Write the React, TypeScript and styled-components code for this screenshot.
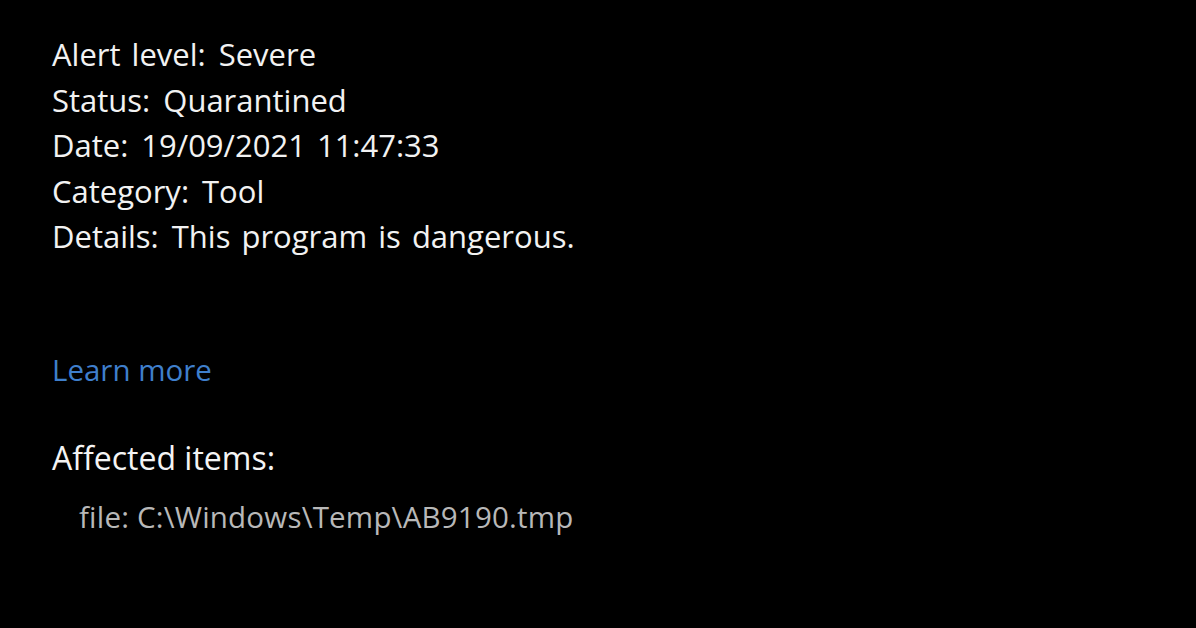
import * as React from 'react';
import styled, { createGlobalStyle } from 'styled-components';

const GlobalStyle = createGlobalStyle`
  html, body {
    margin: 0;
    padding: 0;
    background: #000;
  }
  body {
    font-family: "Open Sans", "Noto Sans", sans-serif;
  }
`;

const details = [
  { label: 'Alert level:', value: 'Severe' },
  { label: 'Status:', value: 'Quarantined' },
  { label: 'Date:', value: '19/09/2021 11:47:33' },
  { label: 'Category:', value: 'Tool' },
  { label: 'Details:', value: 'This program is dangerous.' },
];

function App() {
  return (
    <>
      <GlobalStyle />
      <Page>
        <DetailList>
          {details.map((d) => (
            <DetailRow key={d.label}>
              <span>{d.label}</span>
              <span>{d.value}</span>
            </DetailRow>
          ))}
        </DetailList>
        <LearnMore href="#">Learn more</LearnMore>
        <SectionTitle>Affected items:</SectionTitle>
        <Item>file: C:\Windows\Temp\AB9190.tmp</Item>
      </Page>
    </>
  );
}

const Page = styled.div`
  width: 1196px;
  height: 628px;
  box-sizing: border-box;
  padding: 32px 0 0 52px;
  background: #000;
  color: #f2f2f2;
  display: flex;
  flex-direction: column;
  align-items: flex-start;
`;

const DetailList = styled.div`
  display: flex;
  flex-direction: column;
`;

const DetailRow = styled.div`
  display: flex;
  gap: 13px;
  font-size: 31px;
  line-height: 45.5px;
  word-spacing: 3px;
`;

const LearnMore = styled.a`
  margin-top: 90px;
  font-size: 29.5px;
  line-height: 40px;
  color: #3f7fcc;
  text-decoration: none;
`;

const SectionTitle = styled.div`
  margin-top: 48px;
  font-size: 32px;
  line-height: 40px;
  color: #f4f4f4;
`;

const Item = styled.div`
  margin-top: 20px;
  margin-left: 27px;
  font-size: 29.5px;
  line-height: 38px;
  color: #b8b8b8;
  letter-spacing: 0.2px;
`;

export default App;
